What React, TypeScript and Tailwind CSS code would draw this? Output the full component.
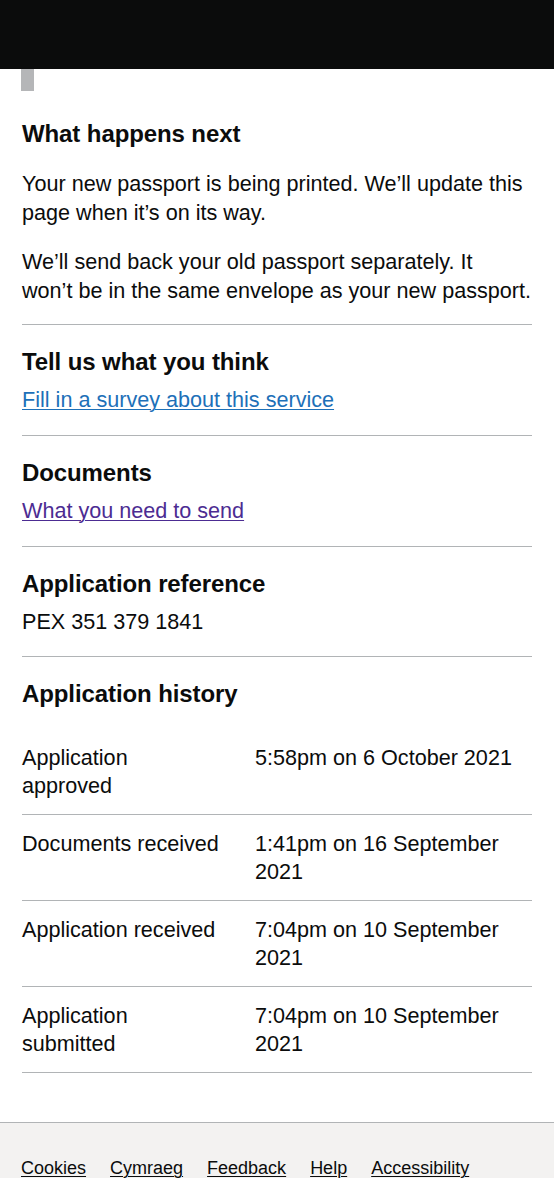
import React from "react";

const font = { fontFamily: '"Liberation Sans", Arial, sans-serif' };

function Section({ title, children }: { title: string; children: React.ReactNode }) {
  return (
    <div className="border-t border-[#b1b4b6] pt-[22px] pb-[20.8px]">
      <h2 className="text-[24px] leading-[30px] font-bold tracking-[-0.1px]">{title}</h2>
      <div className="mt-[8px]">{children}</div>
    </div>
  );
}

const history: [string, string][] = [
  ["Application approved", "5:58pm on 6 October 2021"],
  ["Documents received", "1:41pm on 16 September 2021"],
  ["Application received", "7:04pm on 10 September 2021"],
  ["Application submitted", "7:04pm on 10 September 2021"],
];

export default function App() {
  return (
    <div className="bg-white text-[#0b0c0c] w-[554px]" style={font}>
      <div className="h-[69px] bg-[#0b0c0c]" />
      <div className="ml-[21px] w-[13px] h-[22px] bg-[#b5b6b8]" />
      <main className="px-[22px] text-[21.6px] leading-[29px]">
        <h2 className="mt-[28px] text-[24px] leading-[30px] font-bold tracking-[-0.1px]">What happens next</h2>
        <p className="mt-[19.5px]">Your new passport is being printed. We’ll update this page when it’s on its way.</p>
        <p className="mt-[20px]">
          We’ll send back your old passport separately. It
          <br />
          won’t be in the same envelope as your new passport.
        </p>
        <div className="mt-[19.5px]">
          <Section title="Tell us what you think">
            <a href="#" className="text-[#1d70b8] underline decoration-1 underline-offset-2">
              Fill in a survey about this service
            </a>
          </Section>
          <Section title="Documents">
            <a href="#" className="text-[#4c2c92] underline decoration-1 underline-offset-2">
              What you need to send
            </a>
          </Section>
          <Section title="Application reference">
            <div>PEX 351 379 1841</div>
          </Section>
          <div className="border-t border-[#b1b4b6] pt-[22px]">
            <h2 className="text-[24px] leading-[30px] font-bold tracking-[-0.1px]">Application history</h2>
            <div className="mt-[20px] leading-[28px]">
              {history.map(([k, v], i) => (
                <div key={i} className="grid grid-cols-[233px_1fr] border-b border-[#b1b4b6] pt-[15px] pb-[14px]">
                  <div className="pr-[34px]">{k}</div>
                  <div>{v}</div>
                </div>
              ))}
            </div>
          </div>
        </div>
      </main>
      <footer className="mt-[49px] h-[56px] overflow-hidden border-t border-[#b1b4b6] bg-[#f3f2f1] pt-[33px] pl-[21px]">
        <div className="flex gap-[24px] text-[18px] leading-[25px]">
          {["Cookies", "Cymraeg", "Feedback", "Help", "Accessibility"].map((l) => (
            <a key={l} href="#" className="text-[#0b0c0c] underline decoration-1 underline-offset-2">
              {l}
            </a>
          ))}
        </div>
      </footer>
    </div>
  );
}
